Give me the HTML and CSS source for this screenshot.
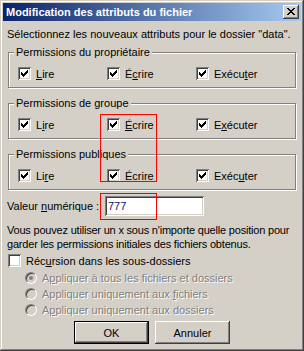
FILE: index.html
```html
<!DOCTYPE html>
<html lang="fr">
<head>
    <meta charset="UTF-8">
    <title>Modification des attributs du fichier</title>
    <link rel="stylesheet" href="styles.css">
</head>
<body>
    <div class="window">
        <div class="titlebar">
            <span class="title">Modification des attributs du fichier</span>
            <span class="close-btn">
                <svg width="8" height="7" viewBox="0 0 8 7" shape-rendering="crispEdges">
                    <path d="M0 0h2v1h-2z M6 0h2v1h-2z M1 1h2v1h-2z M5 1h2v1h-2z M2 2h4v1h-4z M3 3h2v1h-2z M2 4h4v1h-4z M1 5h2v1h-2z M5 5h2v1h-2z M0 6h2v1h-2z M6 6h2v1h-2z" fill="#000"/>
                </svg>
            </span>
        </div>

        <div class="content">
            <p class="intro">Sélectionnez les nouveaux attributs pour le dossier "data".</p>

            <div class="group">
                <span class="group-title">Permissions du propriétaire</span>
                <div class="perm-row">
                    <div class="check"><span class="box checked"></span><span><u>L</u>ire</span></div>
                    <div class="check"><span class="box checked"></span><span>É<u>c</u>rire</span></div>
                    <div class="check"><span class="box checked"></span><span>Exécu<u>t</u>er</span></div>
                </div>
            </div>

            <div class="group">
                <span class="group-title">Permissions de groupe</span>
                <div class="perm-row">
                    <div class="check"><span class="box checked"></span><span>L<u>i</u>re</span></div>
                    <div class="check"><span class="box checked"></span><span><u>É</u>crire</span></div>
                    <div class="check"><span class="box checked"></span><span>E<u>x</u>écuter</span></div>
                </div>
            </div>

            <div class="group">
                <span class="group-title">Permissions publiques</span>
                <div class="perm-row">
                    <div class="check"><span class="box checked"></span><span>Li<u>r</u>e</span></div>
                    <div class="check"><span class="box checked"></span><span>Écrir<u>e</u></span></div>
                    <div class="check"><span class="box checked"></span><span>Exéc<u>u</u>ter</span></div>
                </div>
            </div>

            <div class="value-row">
                <span class="value-label">Valeur <u>n</u>umérique :</span>
                <span class="input">777</span>
            </div>

            <p class="hint">Vous pouvez utiliser un x sous n'importe quelle position pour<br>garder les permissions initiales des fichiers obtenus.</p>

            <div class="check recurse"><span class="box"></span><span>Réc<u>u</u>rsion dans les sous-dossiers</span></div>

            <div class="radios">
                <div class="radio-row"><span class="radio selected"></span><span>A<u>p</u>pliquer à tous les fichiers et dossiers</span></div>
                <div class="radio-row"><span class="radio"></span><span>Appliquer uniquement aux <u>f</u>ichiers</span></div>
                <div class="radio-row"><span class="radio"></span><span>A<u>p</u>pliquer uniquement aux dossiers</span></div>
            </div>

            <div class="buttons">
                <span class="btn default">OK</span>
                <span class="btn">Annuler</span>
            </div>
        </div>

        <div class="mark mark-perms"></div>
        <div class="mark mark-value"></div>
    </div>
</body>
</html>
```

FILE: styles.css
```css
body {
    margin: 0;
    font-family: "Liberation Sans", Arial, sans-serif;
    font-size: 11px;
    color: #000;
}

.window {
    position: relative;
    width: 304px;
    height: 351px;
    box-sizing: border-box;
    padding: 3px;
    background-color: #d4d0c8;
    box-shadow: inset -1px -1px #404040, inset 1px 1px #d4d0c8, inset -2px -2px #808080, inset 2px 2px #fff;
}

.titlebar {
    height: 18px;
    display: flex;
    align-items: center;
    justify-content: space-between;
    padding-left: 3px;
    background: linear-gradient(to right, #0a246a, #a6caf0);
    color: #fff;
    font-weight: bold;
}

.close-btn {
    width: 16px;
    height: 14px;
    box-sizing: border-box;
    margin-right: 2px;
    display: flex;
    align-items: center;
    justify-content: center;
    background-color: #d4d0c8;
    box-shadow: inset -1px -1px #404040, inset 1px 1px #fff, inset -2px -2px #808080;
}

.close-btn svg {
    margin: 0 1px 1px 0;
}

.content {
    padding: 7px 4px 0 4px;
    white-space: nowrap;
}

.intro {
    margin: 0;
    line-height: 13px;
}

/* group boxes */
.group {
    position: relative;
    width: 288px;
    height: 36px;
    box-sizing: border-box;
    margin: 11px 0 0 1px;
    border: 1px solid #808080;
    box-shadow: 1px 1px 0 #fff, inset 1px 1px 0 #fff;
}

.group + .group {
    margin-top: 15px;
}

.group-title {
    position: absolute;
    top: -7px;
    left: 5px;
    padding: 0 2px;
    line-height: 13px;
    background-color: #d4d0c8;
}

.perm-row {
    display: grid;
    grid-template-columns: 89px 89px 89px;
    padding: 14px 0 0 9px;
}

.check {
    display: flex;
    align-items: center;
    gap: 5px;
    height: 13px;
}

.box {
    position: relative;
    width: 13px;
    height: 13px;
    flex: 0 0 auto;
    box-sizing: border-box;
    background-color: #fff;
    box-shadow: inset 1px 1px #808080, inset -1px -1px #fff, inset 2px 2px #404040, inset -2px -2px #d4d0c8;
}

.box.checked::after {
    content: "";
    position: absolute;
    left: 3px;
    top: 3px;
    width: 7px;
    height: 7px;
    background: url("data:image/svg+xml;utf8,<svg xmlns='http://www.w3.org/2000/svg' width='7' height='7' shape-rendering='crispEdges'><path d='M6 0h1v1h-1z M5 1h2v1h-2z M0 2h1v1h-1z M4 2h3v1h-3z M0 3h2v1h-2z M3 3h3v1h-3z M0 4h5v1h-5z M1 5h3v1h-3z M2 6h1v1h-1z' fill='black'/></svg>");
}

.value-row {
    display: flex;
    align-items: center;
    margin-top: 6px;
}

.value-label {
    width: 98px;
}

.input {
    width: 99px;
    height: 20px;
    box-sizing: border-box;
    padding: 0 3px;
    line-height: 20px;
    color: #0a1a5a;
    background-color: #fff;
    box-shadow: inset 1px 1px #808080, inset -1px -1px #fff, inset 2px 2px #404040, inset -2px -2px #d4d0c8;
}

.hint {
    margin: 7px 0 0 0;
    line-height: 14px;
    letter-spacing: -0.2px;
}

.recurse {
    margin: 3px 0 0 1px;
}

.radios {
    display: flex;
    flex-direction: column;
    gap: 4px;
    margin: 5px 0 0 18px;
    color: #808080;
    text-shadow: 1px 1px 0 #fff;
}

.radio-row {
    display: flex;
    align-items: center;
    gap: 5px;
    height: 12px;
}

.radio {
    position: relative;
    width: 12px;
    height: 12px;
    flex: 0 0 auto;
    box-sizing: border-box;
    border-radius: 50%;
    border: 1px solid;
    border-color: #808080 #fff #fff #808080;
    background-color: #d4d0c8;
    box-shadow: inset 1px 1px #404040, inset -1px -1px #d4d0c8;
}

.radio.selected::after {
    content: "";
    position: absolute;
    left: 3px;
    top: 3px;
    width: 4px;
    height: 4px;
    border-radius: 50%;
    background-color: #808080;
}

.buttons {
    display: flex;
    justify-content: center;
    gap: 6px;
    margin-top: 5px;
}

.btn {
    width: 75px;
    height: 23px;
    box-sizing: border-box;
    display: flex;
    align-items: center;
    justify-content: center;
    background-color: #d4d0c8;
    box-shadow: inset -1px -1px #404040, inset 1px 1px #fff, inset -2px -2px #808080;
}

.btn.default {
    border: 1px solid #000;
}

/* red annotation frames */
.mark {
    position: absolute;
    border: 1px solid #ff0000;
    box-sizing: border-box;
}

.mark-perms {
    left: 100px;
    top: 114px;
    width: 57px;
    height: 68px;
}

.mark-value {
    left: 100px;
    top: 193px;
    width: 57px;
    height: 27px;
}
```
